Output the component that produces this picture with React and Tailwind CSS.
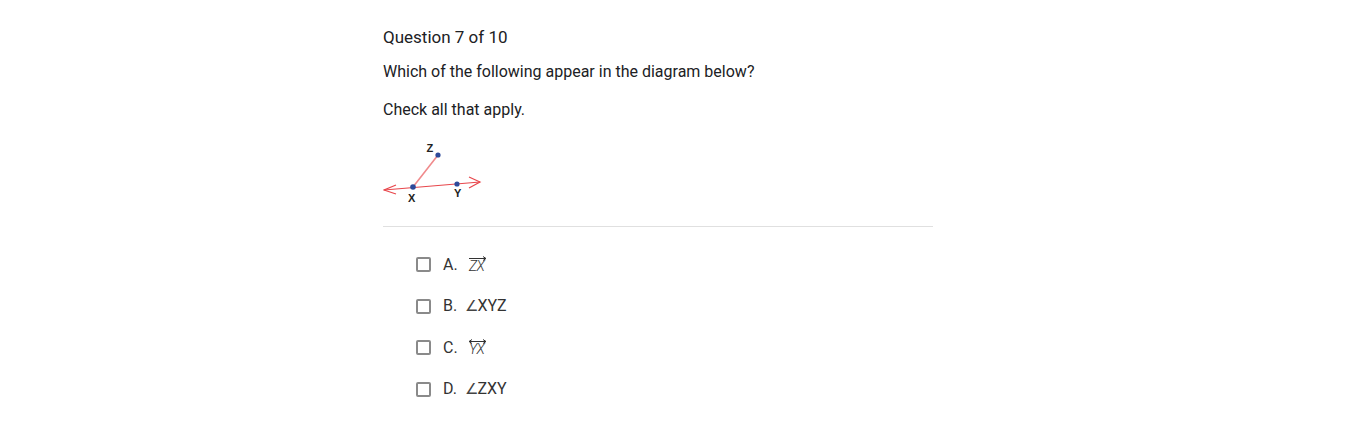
import React from "react";

function Diagram() {
  return (
    <svg width="100" height="66" viewBox="0 0 100 66" className="block">
      <line x1="1" y1="50" x2="97" y2="42" stroke="#e8474c" strokeWidth="1.2" />
      <polyline points="13,45 1,50 13,54" fill="none" stroke="#e8474c" strokeWidth="1.2" />
      <polyline points="86,37 97,42 86,48" fill="none" stroke="#e8474c" strokeWidth="1.2" />
      <line x1="30" y1="47" x2="55" y2="15" stroke="#f08a8c" strokeWidth="1.6" />
      <circle cx="55" cy="15" r="2.6" fill="#2d4a9a" />
      <circle cx="30" cy="47" r="2.8" fill="#2d4a9a" />
      <circle cx="74" cy="44" r="2.6" fill="#2d4a9a" />
      <text x="43.5" y="12" fontSize="11" fontWeight="700" fill="#222" fontFamily="'Liberation Sans', Arial, sans-serif">Z</text>
      <text x="25" y="62" fontSize="11" fontWeight="700" fill="#222" fontFamily="'Liberation Sans', Arial, sans-serif">X</text>
      <text x="71" y="57" fontSize="11" fontWeight="700" fill="#222" fontFamily="'Liberation Sans', Arial, sans-serif">Y</text>
    </svg>
  );
}

function Ray({ letters, both }) {
  return (
    <svg width="20" height="18" viewBox="0 0 20 18" className="inline-block align-middle">
      <line x1="1" y1="2.5" x2="18" y2="2.5" stroke="#333" strokeWidth="1" />
      <polyline points="15,0.5 18,2.5 15,4.5" fill="none" stroke="#333" strokeWidth="1" />
      {both && <polyline points="4,0.5 1,2.5 4,4.5" fill="none" stroke="#333" strokeWidth="1" />}
      <text
        x="1"
        y="15"
        fontSize="14"
        fontStyle="italic"
        fontWeight="300"
        fill="#333"
        letterSpacing="-0.6"
        fontFamily="Roboto, 'Liberation Sans', sans-serif"
      >
        {letters}
      </text>
    </svg>
  );
}

function Option({ letter, children }) {
  return (
    <label className="flex items-center h-[41.5px] cursor-pointer">
      <span className="w-[15px] h-[15px] border-2 border-[#8a8a8a] rounded-[2px] shrink-0" />
      <span className="ml-[12px] w-[22px] text-[16px] text-[#333]">{letter}.</span>
      <span className="text-[16px] text-[#333] flex items-center">{children}</span>
    </label>
  );
}

function Angle() {
  return (
    <span className="text-[15px] text-[#444] mr-[-1px] [font-family:'DejaVu_Sans',sans-serif]">∠</span>
  );
}

export default function App() {
  return (
    <div className="bg-white min-h-[428px] [font-family:Roboto,'Liberation_Sans',sans-serif] text-[#202124]">
      <div className="ml-[383px] w-[550px] pt-[25px]">
        <div className="text-[17px] leading-[24px]">Question 7 of 10</div>
        <div className="mt-[11px] text-[16px] leading-[24px]">
          Which of the following appear in the diagram below?
        </div>
        <div className="mt-[14px] text-[16px] leading-[24px]">Check all that apply.</div>
        <div className="mt-[18px]">
          <Diagram />
        </div>
        <div className="mt-[20px] border-t border-[#e0e0e0]" />
        <div className="pl-[33px] pt-[17px]">
          <Option letter="A">
            <span className="ml-[3px] mt-[-2px]">
              <Ray letters="ZX" />
            </span>
          </Option>
          <Option letter="B">
            <Angle />
            XYZ
          </Option>
          <Option letter="C">
            <span className="ml-[3px] mt-[-2px]">
              <Ray letters="YX" both />
            </span>
          </Option>
          <Option letter="D">
            <Angle />
            ZXY
          </Option>
        </div>
      </div>
    </div>
  );
}
